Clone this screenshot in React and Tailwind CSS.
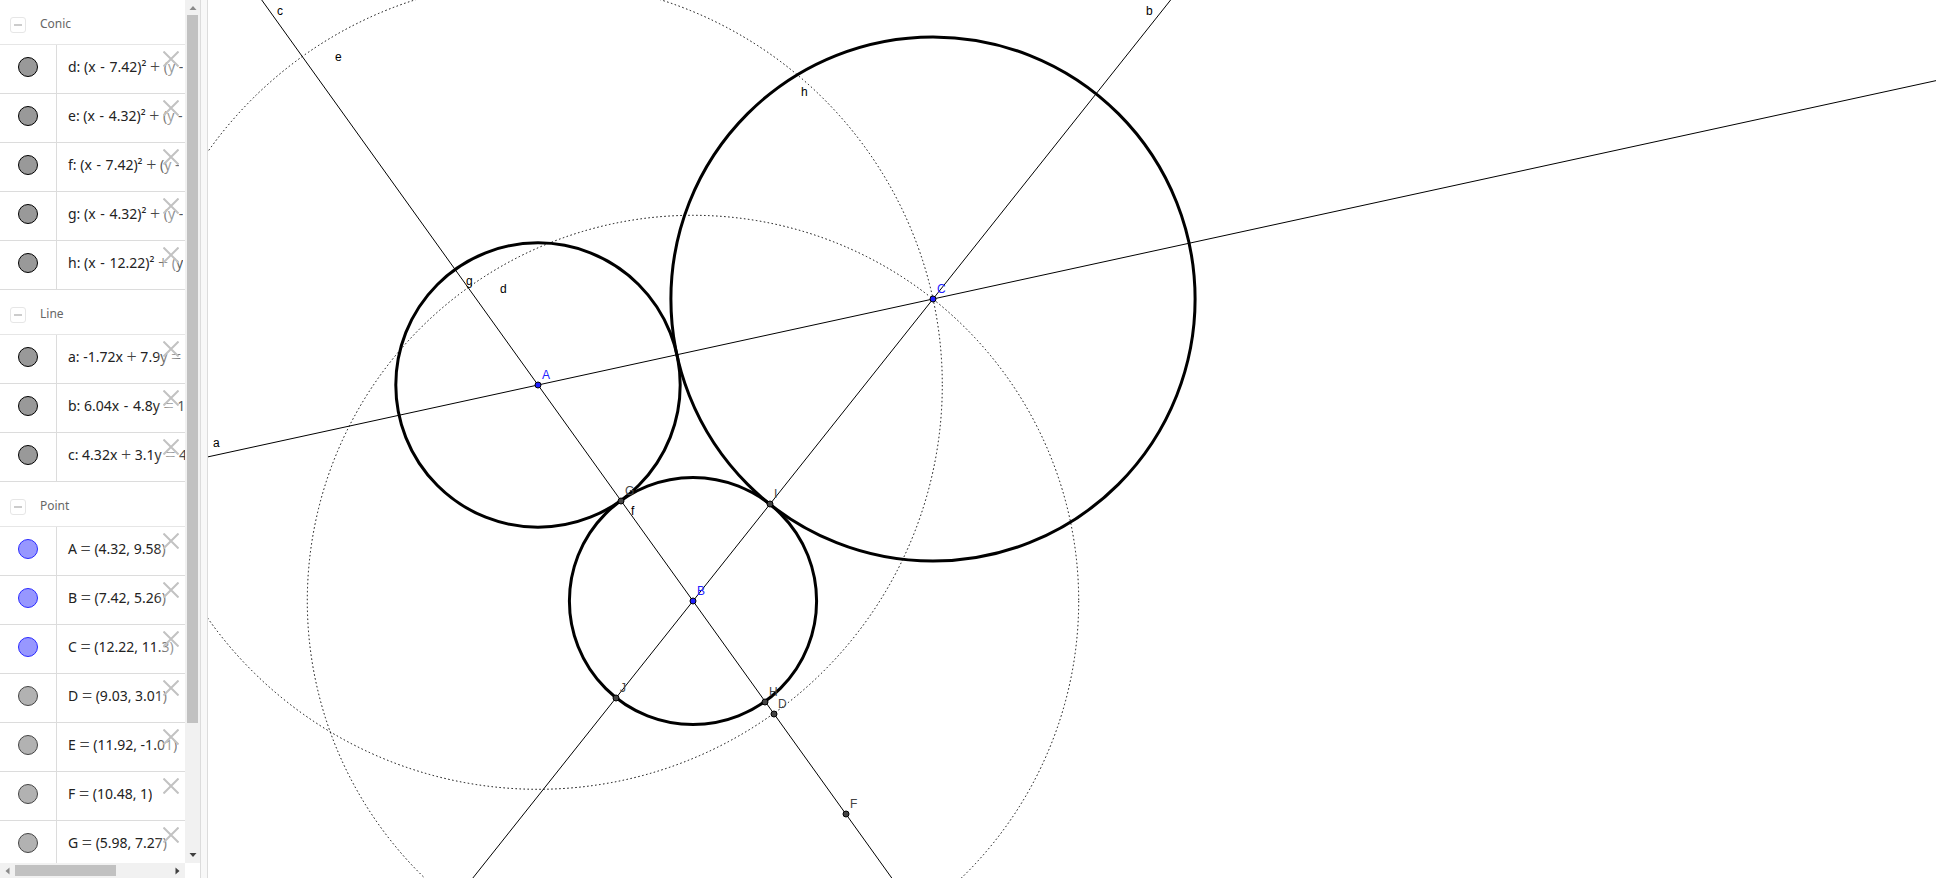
const groups = [
  {
    name: 'Conic',
    items: [
      { id: 'd', text: 'd: (x - 7.42)² + (y -', tone: 'dark' },
      { id: 'e', text: 'e: (x - 4.32)² + (y -', tone: 'dark' },
      { id: 'f', text: 'f: (x - 7.42)² + (y -', tone: 'dark' },
      { id: 'g', text: 'g: (x - 4.32)² + (y -', tone: 'dark' },
      { id: 'h', text: 'h: (x - 12.22)² + (y', tone: 'dark' },
    ],
  },
  {
    name: 'Line',
    items: [
      { id: 'a', text: 'a: -1.72x + 7.9y = 6', tone: 'dark' },
      { id: 'b', text: 'b: 6.04x - 4.8y = 19', tone: 'dark' },
      { id: 'c', text: 'c: 4.32x + 3.1y = 4', tone: 'dark' },
    ],
  },
  {
    name: 'Point',
    items: [
      { id: 'A', text: 'A = (4.32, 9.58)', tone: 'blue' },
      { id: 'B', text: 'B = (7.42, 5.26)', tone: 'blue' },
      { id: 'C', text: 'C = (12.22, 11.3)', tone: 'blue' },
      { id: 'D', text: 'D = (9.03, 3.01)', tone: 'gray' },
      { id: 'E', text: 'E = (11.92, -1.01)', tone: 'gray' },
      { id: 'F', text: 'F = (10.48, 1)', tone: 'gray' },
      { id: 'G', text: 'G = (5.98, 7.27)', tone: 'gray' },
    ],
  },
];

const tones = {
  dark: 'border-black bg-[#999999]',
  blue: 'border-[#2a2aff] bg-[#9797ff]',
  gray: 'border-[#444444] bg-[#b2b2b2]',
};

const points = [
  { id: 'A', x: 330, y: 385, free: true },
  { id: 'B', x: 485, y: 601, free: true },
  { id: 'C', x: 725, y: 299, free: true },
  { id: 'D', x: 566, y: 714 },
  { id: 'F', x: 638, y: 814 },
  { id: 'G', x: 413, y: 501 },
  { id: 'H', x: 557, y: 702 },
  { id: 'I', x: 562, y: 504 },
  { id: 'J', x: 408, y: 698 },
];

const curveLabels = [
  { id: 'a', x: 5, y: 447 },
  { id: 'b', x: 938, y: 15 },
  { id: 'c', x: 69, y: 15 },
  { id: 'd', x: 292, y: 293 },
  { id: 'e', x: 127, y: 61 },
  { id: 'f', x: 423, y: 515 },
  { id: 'g', x: 258, y: 285 },
  { id: 'h', x: 593, y: 96 },
];

function Formula({ text }) {
  return (
    <span className="overflow-hidden pl-[11px] text-[14px] leading-5 whitespace-nowrap text-[#222]">
      {text.split(/([+=]|(?<= )-(?= ))/).map((part, i) => {
        if (part === '+' || part === '=') {
          return (
            <span key={i} className="align-[-1px] font-['Liberation_Serif',serif] text-[18px] leading-none text-[#444]">
              {part}
            </span>
          );
        }
        if (part === '-') {
          return (
            <span key={i} className="mx-px">
              -
            </span>
          );
        }
        return part;
      })}
    </span>
  );
}

function Row({ item }) {
  return (
    <li className="relative flex h-[49px] border-b border-[#dcdcdc]">
      <div className="flex w-[57px] shrink-0 items-center justify-center border-r border-[#dcdcdc] pb-1">
        <button
          type="button"
          aria-label={`Show or hide ${item.id}`}
          className={`size-5 rounded-full border ${tones[item.tone]}`}
        />
      </div>
      <div className="flex items-center overflow-hidden pb-1">
        <Formula text={item.text} />
      </div>
      <button
        type="button"
        aria-label={`Delete ${item.id}`}
        className="absolute top-0 right-0 flex h-full w-[30px] items-start bg-linear-to-r from-white/0 via-white/60 to-white/10 pt-[6px] pl-2"
      >
        <svg width="16" height="16" viewBox="0 0 16 16" stroke="#c2c2c2" strokeWidth="2" aria-hidden="true">
          <path d="M0.5 0.5 15.5 15.5M15.5 0.5 0.5 15.5" />
        </svg>
      </button>
    </li>
  );
}

function Group({ group }) {
  return (
    <section>
      <h2 className="flex h-[45px] items-center gap-[14px] border-b border-[#e6e6e6] pt-1 pl-[10px] text-[12px] font-normal text-[#666]">
        <button
          type="button"
          aria-label={`Collapse ${group.name}`}
          className="mt-[2px] flex size-4 items-center justify-center rounded-[3px] border border-[#e6e6e6]"
        >
          <span className="h-[2px] w-2 bg-[#cccccc]" />
        </button>
        {group.name}
      </h2>
      <ul>
        {group.items.map((item) => (
          <Row key={item.id} item={item} />
        ))}
      </ul>
    </section>
  );
}

function Arrow({ d, fill }) {
  return (
    <svg width="8" height="8" viewBox="0 0 8 8" fill={fill} className="shrink-0" aria-hidden="true">
      <path d={d} />
    </svg>
  );
}

function AlgebraPanel() {
  return (
    <aside className="flex w-[200px] shrink-0 flex-col font-['Noto_Sans',sans-serif]">
      <div className="flex min-h-0 flex-1">
        <div className="w-[185px] overflow-hidden">
          {groups.map((group) => (
            <Group key={group.name} group={group} />
          ))}
        </div>
        <div className="flex flex-1 flex-col items-center bg-[#f1f1f1] pt-1 pb-1">
          <Arrow d="M0.5 6 4 2l3.5 4z" fill="#8a8a8a" />
          <div className="flex min-h-0 w-full flex-1 flex-col pt-[3px] pr-[2px] pb-[3px] pl-[2px]">
            <div className="h-[85%] bg-[#c1c1c1]" />
          </div>
          <Arrow d="M0.5 2 4 6l3.5-4z" fill="#404040" />
        </div>
      </div>
      <div className="flex h-[15px] w-[185px] items-center bg-[#f1f1f1] px-1">
        <Arrow d="M5.5 0.5 1.5 4l4 3.5z" fill="#8a8a8a" />
        <div className="flex-1 px-[3px]">
          <div className="h-[11px] w-[101px] bg-[#c1c1c1]" />
        </div>
        <Arrow d="M2.5 0.5 6.5 4l-4 3.5z" fill="#404040" />
      </div>
    </aside>
  );
}

function GraphicsView() {
  return (
    <main className="min-w-0 flex-1 overflow-hidden">
      <svg
        className="block size-full font-['Liberation_Sans',Arial,sans-serif] text-[12px]"
        role="img"
        aria-label="Three mutually tangent circles"
      >
        <g fill="none" stroke="#000" strokeWidth="1">
          <circle cx="330" cy="385" r="404.3" strokeDasharray="1.5 2.5" />
          <circle cx="485" cy="601" r="385.7" strokeDasharray="1.5 2.5" />
          <path d="M-65 471 3490 -303M965 -3 5 1205M20 -47 795 1033" />
        </g>
        <g fill="none" stroke="#000" strokeWidth="3">
          <circle cx="330" cy="385" r="142.2" />
          <circle cx="485" cy="601" r="123.6" />
          <circle cx="725" cy="299" r="262.1" />
        </g>
        {points.map((p) => (
          <g key={p.id}>
            <circle cx={p.x} cy={p.y} r="3" fill={p.free ? '#2020ff' : '#444'} stroke="#000" strokeWidth="1" />
            <text x={p.x + 4} y={p.y - 6} fill={p.free ? '#2020ff' : '#444'}>
              {p.id}
            </text>
          </g>
        ))}
        {curveLabels.map((l) => (
          <text key={l.id} x={l.x} y={l.y} fill="#000">
            {l.id}
          </text>
        ))}
      </svg>
    </main>
  );
}

export default function App() {
  return (
    <div className="flex h-screen overflow-hidden bg-white pr-[2px] pb-[2px]">
      <AlgebraPanel />
      <div className="w-2 shrink-0 border-x border-[#dcdcdc] bg-[#f8f8f8]" />
      <GraphicsView />
    </div>
  );
}
